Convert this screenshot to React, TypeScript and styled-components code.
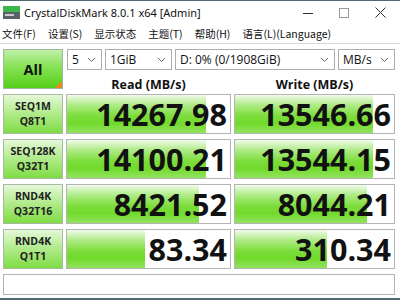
import styled, { createGlobalStyle } from 'styled-components';

const GlobalStyle = createGlobalStyle`
    html, body {
        margin: 0;
        padding: 0;
        background: #ffffff;
    }
    body {
        font-family: "Noto Sans", "Noto Sans CJK SC", sans-serif;
        color: #000;
    }
`;

const rows = [
    { t1: 'SEQ1M', t2: 'Q8T1', read: '14267.98', write: '13546.66', rp: 85, wp: 87 },
    { t1: 'SEQ128K', t2: 'Q32T1', read: '14100.21', write: '13544.15', rp: 85, wp: 87 },
    { t1: 'RND4K', t2: 'Q32T16', read: '8421.52', write: '8044.21', rp: 81, wp: 83 },
    { t1: 'RND4K', t2: 'Q1T1', read: '83.34', write: '310.34', rp: 48, wp: 58 },
];

const DriveIcon = () => (
    <svg width="17" height="13" viewBox="0 0 17 13">
        <rect x="0" y="0" width="17" height="6" fill="#3cb84a" />
        <rect x="0" y="6" width="17" height="7" fill="#5b6266" />
        <rect x="2" y="8" width="9" height="2" fill="#c8cccf" />
    </svg>
);

const Chevron = () => (
    <svg width="9" height="6" viewBox="0 0 9 6">
        <path d="M1 1 L4.5 4.5 L8 1" stroke="#666" strokeWidth="1" fill="none" />
    </svg>
);

export default function App() {
    return (
        <Window>
            <GlobalStyle />
            <TitleBar>
                <TitleLeft>
                    <DriveIcon />
                    <span>CrystalDiskMark 8.0.1 x64 [Admin]</span>
                </TitleLeft>
                <Controls>
                    <Control>
                        <svg width="10" height="10" viewBox="0 0 10 10">
                            <path d="M0 5.5 H10" stroke="#333" strokeWidth="1" />
                        </svg>
                    </Control>
                    <Control>
                        <svg width="10" height="10" viewBox="0 0 10 10">
                            <rect x="0.5" y="0.5" width="9" height="9" stroke="#999" fill="none" />
                        </svg>
                    </Control>
                    <Control>
                        <svg width="11" height="11" viewBox="0 0 11 11">
                            <path d="M0.5 0.5 L10.5 10.5 M10.5 0.5 L0.5 10.5" stroke="#333" strokeWidth="1" />
                        </svg>
                    </Control>
                </Controls>
            </TitleBar>
            <MenuBar>
                <MenuItem>文件(F)</MenuItem>
                <MenuItem>设置(S)</MenuItem>
                <MenuItem>显示状态</MenuItem>
                <MenuItem>主题(T)</MenuItem>
                <MenuItem>帮助(H)</MenuItem>
                <MenuItem>语言(L)(Language)</MenuItem>
            </MenuBar>
            <Main>
                <AllButton>
                    All
                    <Corner />
                </AllButton>
                <Selects>
                    <Select $w={35}>
                        <span>5</span>
                        <Chevron />
                    </Select>
                    <Select $w={67}>
                        <span>1GiB</span>
                        <Chevron />
                    </Select>
                    <Select $w={160}>
                        <span>D: 0% (0/1908GiB)</span>
                        <Chevron />
                    </Select>
                    <Select $w={57}>
                        <span>MB/s</span>
                        <Chevron />
                    </Select>
                </Selects>
                <Header $col={2}>Read (MB/s)</Header>
                <Header $col={3}>Write (MB/s)</Header>
                {rows.map((r, i) => (
                    <Row key={i}>
                        <Label>
                            <span>{r.t1}</span>
                            <span>{r.t2}</span>
                        </Label>
                        <Meter>
                            <Fill style={{ width: `${r.rp}%` }} />
                            <Value>{r.read}</Value>
                        </Meter>
                        <Meter>
                            <Fill style={{ width: `${r.wp}%` }} />
                            <Value>{r.write}</Value>
                        </Meter>
                    </Row>
                ))}
                <Status />
            </Main>
            <BottomEdge />
        </Window>
    );
}

const Window = styled.div`
    width: 400px;
    height: 300px;
    overflow: hidden;
    display: flex;
    flex-direction: column;
    background: #fff;
    border-top: 1px solid #4d6a70;
    box-sizing: border-box;
`;

const TitleBar = styled.div`
    height: 23px;
    display: flex;
    justify-content: space-between;
    align-items: center;
    padding-left: 3px;
`;

const TitleLeft = styled.div`
    display: flex;
    align-items: center;
    gap: 4px;
    font-family: "Noto Sans", sans-serif;
    font-size: 11px;
    color: #111;
`;

const Controls = styled.div`
    display: flex;
    height: 100%;
    margin-right: 2px;
`;

const Control = styled.div`
    width: 36px;
    display: flex;
    align-items: center;
    justify-content: center;
`;

const MenuBar = styled.div`
    height: 19px;
    display: flex;
    align-items: center;
    padding-left: 2px;
    border-bottom: 1px solid #d8d8d8;
    gap: 12px;
`;

const MenuItem = styled.div`
    font-family: "Noto Sans CJK SC", "Noto Sans", sans-serif;
    font-size: 10.5px;
    color: #111;
    white-space: nowrap;
`;

const Main = styled.div`
    display: grid;
    grid-template-columns: 60px 165px 161px;
    grid-template-rows: 21px 19px;
    column-gap: 3px;
    row-gap: 0;
    padding: 5px 0 0 3px;
`;

const AllButton = styled.div`
    grid-column: 1;
    grid-row: 1 / span 2;
    position: relative;
    box-sizing: border-box;
    border: 1px solid #9fb89a;
    background: linear-gradient(to bottom, #bff0a8 0%, #86e254 45%, #55d019 100%);
    display: flex;
    align-items: center;
    justify-content: center;
    font-family: "Open Sans", sans-serif;
    font-weight: 700;
    font-size: 14.5px;
    color: #111;
`;

const Corner = styled.div`
    position: absolute;
    right: 0;
    bottom: 0;
    width: 0;
    height: 0;
    border-left: 7px solid transparent;
    border-bottom: 7px solid #f0822c;
`;

const Selects = styled.div`
    grid-column: 2 / span 2;
    grid-row: 1;
    display: flex;
    gap: 3px;
    margin-left: 1px;
`;

const Select = styled.div<{ $w: number }>`
    width: ${(p) => p.$w}px;
    height: 21px;
    box-sizing: border-box;
    border: 1px solid #adadad;
    background: #fff;
    display: flex;
    align-items: center;
    justify-content: space-between;
    padding: 0 5px 0 4px;
    font-family: "Open Sans", sans-serif;
    font-size: 12px;
    color: #111;
    white-space: nowrap;
`;

const Header = styled.div<{ $col: number }>`
    grid-column: ${(p) => p.$col};
    grid-row: 2;
    display: flex;
    align-items: flex-end;
    justify-content: center;
    font-family: "Open Sans", sans-serif;
    font-weight: 700;
    font-size: 12.5px;
    color: #111;
    line-height: 9px;
`;

const Row = styled.div`
    display: contents;
`;

const Label = styled.div`
    grid-column: 1;
    margin-top: 5px;
    height: 40px;
    box-sizing: border-box;
    border: 1px solid #a9b9a6;
    background: linear-gradient(to bottom, #e6f8da 0%, #b4ec90 45%, #7fdc43 100%);
    display: flex;
    flex-direction: column;
    align-items: center;
    justify-content: center;
    font-family: "Open Sans", sans-serif;
    font-weight: 700;
    font-size: 10.5px;
    line-height: 15px;
    color: #222;
`;

const Meter = styled.div`
    margin-top: 5px;
    height: 40px;
    box-sizing: border-box;
    border: 1px solid #b4b4b4;
    background: #fff;
    position: relative;
    overflow: hidden;
    display: flex;
    align-items: center;
    justify-content: flex-end;
`;

const Fill = styled.div`
    position: absolute;
    left: 0;
    top: 0;
    bottom: 0;
    background: linear-gradient(to bottom, #f2fbec 0%, #b2ec8c 25%, #7ddd3c 55%, #72da2c 75%, #92e35f 100%);
`;

const Value = styled.span`
    position: relative;
    font-family: "Open Sans", sans-serif;
    font-weight: 700;
    font-size: 30.5px;
    color: #111;
    padding-right: 3px;
    line-height: 1;
`;

const Status = styled.div`
    grid-column: 1 / span 3;
    margin-top: 5px;
    height: 21px;
    box-sizing: border-box;
    border: 1px solid #b4b4b4;
    background: #fff;
`;

const BottomEdge = styled.div`
    margin-top: auto;
    height: 2px;
    background: #4d6a70;
`;
